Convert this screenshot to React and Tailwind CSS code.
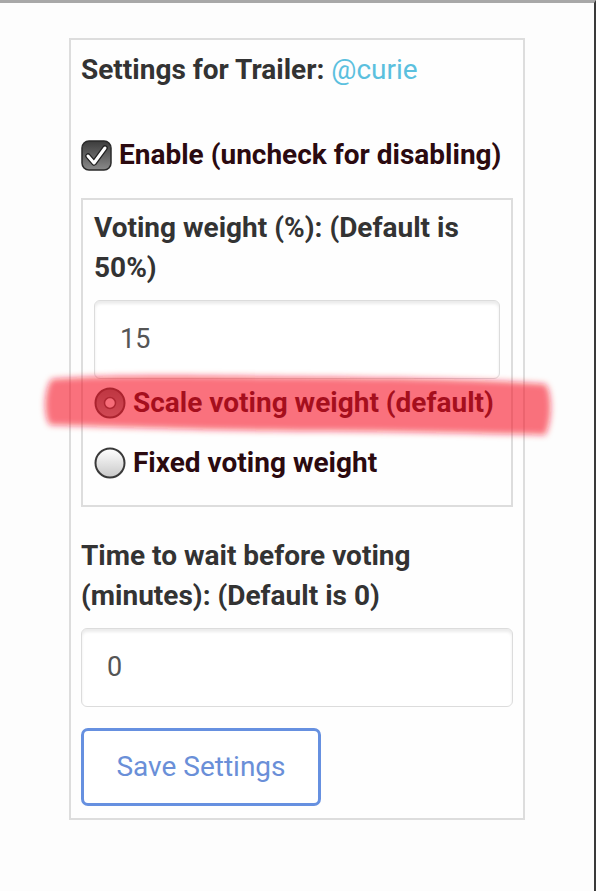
import React from "react";

function CheckIcon() {
  return (
    <svg width="31" height="31" viewBox="0 0 31 31" className="shrink-0">
      <defs>
        <linearGradient id="cbg" x1="0" y1="0" x2="0" y2="1">
          <stop offset="0" stopColor="#3c3c3c" />
          <stop offset="1" stopColor="#8a8a8a" />
        </linearGradient>
      </defs>
      <rect x="1" y="1" width="29" height="29" rx="7" fill="url(#cbg)" stroke="#2a2a2a" strokeWidth="1.5" />
      <path d="M7 16 L13 23 L24 8" fill="none" stroke="#222" strokeWidth="5.5" strokeLinecap="round" strokeLinejoin="round" />
      <path d="M7 16 L13 23 L24 8" fill="none" stroke="#fff" strokeWidth="3" strokeLinecap="round" strokeLinejoin="round" />
    </svg>
  );
}

function RadioIcon({ checked }) {
  return (
    <svg width="32" height="32" viewBox="0 0 32 32" className="shrink-0">
      <defs>
        <linearGradient id={checked ? "rgc" : "rgu"} x1="0" y1="0" x2="0" y2="1">
          {checked ? (
            <>
              <stop offset="0" stopColor="#6a6a6a" />
              <stop offset="1" stopColor="#9a9a9a" />
            </>
          ) : (
            <>
              <stop offset="0" stopColor="#ffffff" />
              <stop offset="1" stopColor="#c8c8c8" />
            </>
          )}
        </linearGradient>
      </defs>
      <circle cx="16" cy="16" r="14.5" fill={`url(#${checked ? "rgc" : "rgu"})`} stroke="#3a3a3a" strokeWidth="2" />
      {checked && <circle cx="16" cy="16" r="5.5" fill="#f4f4f4" stroke="#444" strokeWidth="1.5" />}
    </svg>
  );
}

export default function App() {
  return (
    <div
      className="relative w-full h-screen bg-[#fdfdfd] overflow-hidden border-t-[3px] border-r-2 border-t-[#a8a8a8] border-r-[#3a3a3a]"
      style={{ fontFamily: "Roboto, 'Noto Sans', sans-serif" }}
    >
      <div className="pt-[35px] pl-[69px]">
        <div className="w-[456px] border-2 border-[#dddddd] bg-[#fefefe] px-[10px] pt-[10px] pb-[12px] flex flex-col">
          <div className="text-[28px] leading-[40px] font-bold text-[#333333]">
            Settings for Trailer: <span className="font-normal text-[#5bc0de]">@curie</span>
          </div>

          <div className="mt-[45px] flex items-center gap-[7px] h-[40px]">
            <CheckIcon />
            <span className="text-[28px] font-bold text-[#2b0a10] leading-[40px] whitespace-nowrap">
              Enable (uncheck for disabling)
            </span>
          </div>

          <div className="mt-[23px] border-2 border-[#dddddd] px-[11px] pt-[8px] pb-[22px] flex flex-col">
            <div className="text-[28px] leading-[40px] font-bold text-[#333333]">
              Voting weight (%): (Default is 50%)
            </div>
            <div className="mt-[12px] h-[79px] rounded-[6px] border border-[#dcdcdc] bg-white shadow-[inset_0_3px_3px_rgba(0,0,0,0.08)] flex items-center px-[25px] text-[27px] text-[#555555]">
              15
            </div>
            <div className="mt-[4px] flex flex-col gap-[20px]">
              <div className="flex items-center gap-[7px] h-[40px]">
                <RadioIcon checked />
                <span className="text-[28px] font-bold text-[#2b0a10] whitespace-nowrap">Scale voting weight (default)</span>
              </div>
              <div className="flex items-center gap-[7px] h-[40px]">
                <RadioIcon />
                <span className="text-[28px] font-bold text-[#2b0a10] whitespace-nowrap">Fixed voting weight</span>
              </div>
            </div>
          </div>

          <div className="mt-[29px] text-[28px] leading-[40px] font-bold text-[#333333]">
            Time to wait before voting (minutes): (Default is 0)
          </div>
          <div className="mt-[12px] h-[79px] rounded-[6px] border border-[#dcdcdc] bg-white shadow-[inset_0_3px_3px_rgba(0,0,0,0.08)] flex items-center px-[25px] text-[27px] text-[#555555]">
            0
          </div>
          <div className="mt-[21px]">
            <button className="w-[240px] h-[78px] rounded-[7px] border-[3px] border-[#6690e0] bg-white text-[28px] text-[#6a8fd8]">
              Save Settings
            </button>
          </div>
        </div>
      </div>

      <svg className="absolute left-0 top-0 pointer-events-none" width="590" height="500">
        <defs>
          <filter id="blur" x="-10%" y="-50%" width="120%" height="200%">
            <feGaussianBlur stdDeviation="3" />
          </filter>
        </defs>
        <path
          d="M52 376 C120 371 200 373 300 374 C400 375 480 376 545 381 C553 388 552 421 545 432 C470 430 380 428 300 428 C200 427 120 424 50 422 C43 413 44 385 52 376 Z"
          fill="rgb(247,22,38)"
          fillOpacity="0.6"
          filter="url(#blur)"
        />
      </svg>
    </div>
  );
}
